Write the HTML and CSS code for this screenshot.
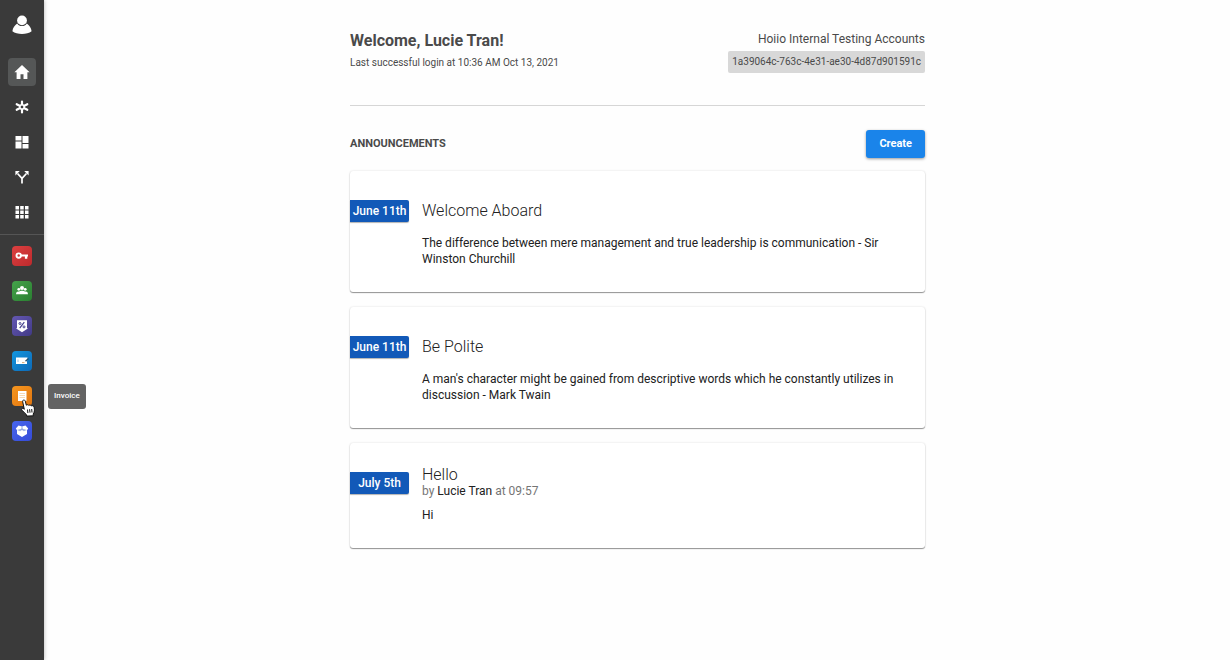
FILE: index.html
```html
<!DOCTYPE html>
<html lang="en">
<head>
<meta charset="utf-8">
<meta name="viewport" content="width=device-width, initial-scale=1">
<title>Announcements</title>
<link rel="stylesheet" href="styles.css">
</head>
<body>
<div class="shell">
  <aside class="sidebar">
    <a class="profile" href="#profile" aria-label="Profile">
      <svg width="20" height="20" viewBox="0 0 20 20" fill="#fff"><path d="M5.200 8.400C2.800 10 .8 12.600.4 16.300C2.600 18.200 6.300 19 10 19s7.400-.8 9.600-2.700C19.200 12.600 17.200 10 14.800 8.400C13.700 10.200 12 11 10 11S6.300 10.200 5.200 8.400z"/><circle cx="10" cy="5.400" r="4.900"/></svg>
    </a>
    <nav class="nav" aria-label="Main">
      <a class="nav-item active" href="#home" aria-label="Home" aria-current="page">
        <svg width="16" height="16" viewBox="0 0 16 16" fill="#fff"><path d="M8 1 .4 8.200h2.200V15h3.900v-4.800h3V15h3.900V8.200h2.200z"/></svg>
      </a>
      <a class="nav-item" href="#hub" aria-label="Hub">
        <svg width="14" height="14" viewBox="0 0 14 14" stroke="#fff" stroke-width="2.200" stroke-linecap="round" fill="none"><path d="M7 1.500v3M7 9.500v3M1.700 4.200l2.900 1.500M9.400 8.300l2.900 1.500M12.300 4.200 9.400 5.700M4.600 8.300l-2.900 1.500"/><circle cx="7" cy="7" r="2.200" stroke-width="1.500"/></svg>
      </a>
      <a class="nav-item" href="#dashboard" aria-label="Dashboard">
        <svg width="14" height="14" viewBox="0 0 14 14" fill="#fff"><path d="M.5 1h6v4.500h-6zM.5 6.500h6v7h-6zM7.500 1h6v7h-6zM7.500 9h6v4.500h-6z"/></svg>
      </a>
      <a class="nav-item" href="#flows" aria-label="Flows">
        <svg width="14" height="14" viewBox="0 0 14 14"><path d="M7 13.500V8.300L2.500 3.500M7 8.300l4.500-4.800" fill="none" stroke="#fff" stroke-width="1.700"/><path d="M.4 1h4.400L.4 5.400zM13.600 1v4.400L9.200 1z" fill="#fff"/></svg>
      </a>
      <a class="nav-item" href="#apps" aria-label="All apps">
        <svg width="14" height="14" viewBox="0 0 14 14" fill="#fff"><path d="M.5 1h3.500v3.500H.5zM5.200 1h3.500v3.500H5.200zM10 1h3.500v3.500H10zM.5 5.500h3.500V9H.5zM5.200 5.500h3.500V9H5.200zM10 5.500h3.500V9H10zM.5 10h3.500v3.500H.5zM5.200 10h3.500v3.500H5.200zM10 10h3.500v3.500H10z"/></svg>
      </a>
    </nav>
    <nav class="nav apps" aria-label="Apps">
      <a class="nav-item" href="#access" aria-label="Access">
        <span class="app app-red"><svg width="20" height="20" viewBox="0 0 20 20"><circle cx="6.700" cy="9.600" r="2.200" fill="none" stroke="#fff" stroke-width="1.900"/><path d="M8.800 8.600H16v2h-.7v2.100h-2.400v-2.100H8.800z" fill="#fff"/></svg></span>
      </a>
      <a class="nav-item" href="#contacts" aria-label="Contacts">
        <span class="app app-green"><svg width="20" height="20" viewBox="0 0 20 20" fill="#fff"><circle cx="10" cy="7" r="2"/><circle cx="6.800" cy="8.300" r="1.400"/><circle cx="13.200" cy="8.300" r="1.400"/><path d="M7 10.700c.8-1.200 5.200-1.200 6 0 1.500-.4 2.800.2 3 2.500H4c.2-2.300 1.500-2.900 3-2.500z"/></svg></span>
      </a>
      <a class="nav-item" href="#discounts" aria-label="Discounts">
        <span class="app app-purple"><svg width="20" height="20" viewBox="0 0 20 20"><path d="M5 4.200h10v8h1.200L10 16.200 3.800 12.200H5z" fill="#fff"/><path d="m12.300 6.200-4.600 6" stroke="#44408f" stroke-width="1.200"/><circle cx="8" cy="7.500" r="1" fill="none" stroke="#44408f"/><circle cx="12" cy="10.900" r="1" fill="none" stroke="#44408f"/></svg></span>
      </a>
      <a class="nav-item" href="#payments" aria-label="Payments">
        <span class="app app-blue"><svg width="20" height="20" viewBox="0 0 20 20"><path d="M4 6.500h11.500V8L15 10v3H4z" fill="#fff"/><path d="M6 8.500v2.500" stroke="#9ccbe8"/><path d="M10 11.600h2.500" stroke="#d8aa79"/><path d="m13.500 10.300 3-2.800" stroke="#24506f" stroke-width="1.400"/></svg></span>
      </a>
      <a class="nav-item" href="#invoice" aria-label="Invoice" aria-describedby="invoice-tip">
        <span class="app app-orange"><svg width="20" height="20" viewBox="0 0 20 20"><path d="M6 5h8.500v10H6z" fill="#fff"/><path d="M7.500 7.500h5.500M7.500 9.500h5.500M7.500 11.500h5.500" stroke="#f5cf9f" stroke-width=".8"/></svg></span>
        <svg class="cursor" width="15" height="18" viewBox="0 0 15 18"><path d="M3.300 10.300 1.700 2.800c-.4-2.100 2.100-2.500 2.600-.6l1 4c.8-.8 2.100-.6 2.500.2.900-.7 2.100-.4 2.500.5 1.200-.6 2.500 0 2.800 1.300.6 2.700.4 4.800-.9 6.800l.2 1.800-6.600.3-.4-1.500c-1.700-1.100-2.500-2.800-4.300-4.300C-.4 9.700 1.800 8.500 3.300 10.300z" fill="#fff" stroke="#111" stroke-width="1"/><path d="m6.500 10.500.4 3.500M8.600 10.200l.4 3.500M10.700 10l.3 3.500" stroke="#111" stroke-width="1"/></svg>
        <span class="tooltip" id="invoice-tip" role="tooltip">Invoice</span>
      </a>
      <a class="nav-item" href="#inventory" aria-label="Inventory">
        <span class="app app-indigo"><svg width="20" height="20" viewBox="0 0 20 20"><path d="m6.500 4.500 3.500 1 3.500-1 2.700 3L15 9.200V13l-5 3-5-3V9.200L3.800 7.500z" fill="#fff"/><path d="m5 9 5-1.500L15 9l-3.200 1.300L10 9l-1.800 1.300z" fill="#a3b3e4"/><path d="M10 5.500V9" stroke="#7792de" stroke-width=".8"/></svg></span>
      </a>
    </nav>
  </aside>

  <main class="main">
    <div class="content">
      <header class="header">
        <div class="greeting">
          <h1 class="welcome">Welcome, Lucie Tran!</h1>
          <p class="login">Last successful login at 10:36 AM Oct 13, 2021</p>
        </div>
        <div class="account">
          <p class="account-name">Hoiio Internal Testing Accounts</p>
          <p class="account-id">1a39064c-763c-4e31-ae30-4d87d901591c</p>
        </div>
      </header>

      <div class="toolbar">
        <h2 class="section-title">ANNOUNCEMENTS</h2>
        <button class="create" type="button">Create</button>
      </div>

      <div class="cards">
        <article class="card">
          <time class="date">June 11th</time>
          <div class="card-body">
            <h3 class="card-title">Welcome Aboard</h3>
            <p class="card-text">The difference between mere management and true leadership is communication - Sir Winston Churchill</p>
          </div>
        </article>
        <article class="card">
          <time class="date">June 11th</time>
          <div class="card-body">
            <h3 class="card-title">Be Polite</h3>
            <p class="card-text">A man's character might be gained from descriptive words which he constantly utilizes in discussion - Mark Twain</p>
          </div>
        </article>
        <article class="card card-signed">
          <time class="date">July 5th</time>
          <div class="card-body">
            <h3 class="card-title">Hello</h3>
            <p class="byline">by <span class="author">Lucie Tran</span> at 09:57</p>
            <p class="card-text">Hi</p>
          </div>
        </article>
      </div>
    </div>
  </main>
</div>
</body>
</html>
```
FILE: styles.css
```css
* {
  box-sizing: border-box;
}

body {
  margin: 0;
  background: #fefefe;
  color: #212121;
  font-family: Roboto, "Liberation Sans", sans-serif;
  font-size: 12px;
  line-height: 16px;
}

h1, h2, h3, p {
  margin: 0;
}

.shell {
  display: flex;
  min-height: 100vh;
}

.sidebar {
  display: flex;
  flex: none;
  flex-direction: column;
  align-items: center;
  width: 44px;
  padding-top: 15px;
  background: #3a3a3a;
  box-shadow: 0 0 4px rgba(0, 0, 0, 0.3);
}

.profile {
  display: flex;
  margin-bottom: 23px;
}

.nav {
  display: flex;
  flex-direction: column;
  align-items: center;
  gap: 7px;
  width: 100%;
}

.nav-item {
  position: relative;
  display: flex;
  align-items: center;
  justify-content: center;
  width: 28px;
  height: 28px;
  border-radius: 4px;
}

.nav-item.active {
  background: #555757;
}

.apps {
  margin-top: 8px;
  padding-top: 7px;
  border-top: 1px solid #555;
}

.app {
  display: flex;
  width: 20px;
  height: 20px;
  border-radius: 4px;
}

.app-red { background: linear-gradient(135deg, #dd4040, #bd2a2d); }
.app-green { background: linear-gradient(135deg, #45a34b, #2a7f31); }
.app-purple { background: linear-gradient(135deg, #6558b3, #413a86); }
.app-blue { background: linear-gradient(135deg, #1497df, #0d69b7); }
.app-orange { background: linear-gradient(135deg, #f6961f, #e27610); }
.app-indigo { background: linear-gradient(135deg, #4866ee, #354bd8); }

.cursor {
  position: absolute;
  top: 17px;
  left: 13px;
}

.tooltip {
  position: absolute;
  top: 2px;
  left: 40px;
  padding: 4px 6px 5px;
  border-radius: 3px;
  background: #636363;
  color: #fff;
  font-size: 8px;
  font-weight: 500;
  line-height: 16px;
}

.main {
  flex: 1;
  min-width: 0;
  padding: 30px 16px 30px 17px;
}

.content {
  max-width: 575px;
  margin: 0 auto;
}

.header {
  display: flex;
  justify-content: space-between;
  padding-bottom: 32px;
  border-bottom: 1px solid #d6d6d6;
  color: #4a4a4a;
}

.welcome {
  font-size: 16px;
  font-weight: 700;
  line-height: 22px;
}

.login {
  margin-top: 2px;
  font-size: 10px;
  line-height: 18px;
}

.account {
  display: flex;
  flex-direction: column;
  align-items: flex-end;
}

.account-name {
  line-height: 18px;
}

.account-id {
  margin-top: 3px;
  padding: 3px 4px;
  border-radius: 2px;
  background: #d8d8d8;
  font-size: 10px;
}

.toolbar {
  display: flex;
  align-items: center;
  justify-content: space-between;
  margin: 24px 0 13px;
}

.section-title {
  color: #4a4a4a;
  font-size: 11px;
  font-weight: 700;
}

.create {
  height: 28px;
  padding: 0 13px;
  border: 0;
  border-radius: 3px;
  background: #1a84ea;
  box-shadow: 0 1px 3px rgba(0, 0, 0, 0.4);
  color: #fff;
  font: 700 11px/16px Roboto, "Liberation Sans", sans-serif;
}

.cards {
  display: grid;
  gap: 15px;
}

.card {
  display: flex;
  align-items: flex-start;
  gap: 13px;
  padding: 29px 24px 25px 0;
  border-radius: 3px;
  background: #fff;
  box-shadow: 0 1px 1px rgba(0, 0, 0, 0.4), 0 0 2px rgba(0, 0, 0, 0.15);
}

.date {
  flex: none;
  width: 59px;
  border-radius: 0 2px 2px 0;
  background: #1259b8;
  box-shadow: 0 1px 1px rgba(0, 0, 0, 0.3);
  color: #fff;
  font-weight: 500;
  line-height: 22px;
  text-align: center;
}

.card-title {
  font-size: 16px;
  font-weight: 300;
  line-height: 22px;
}

.card-text {
  margin-top: 13px;
}

.card-signed .card-body {
  margin-top: -8px;
}

.card-signed .card-text {
  margin-top: 8px;
}

.byline {
  margin-top: -3px;
  color: #757575;
}

.author {
  color: #212121;
}
```
